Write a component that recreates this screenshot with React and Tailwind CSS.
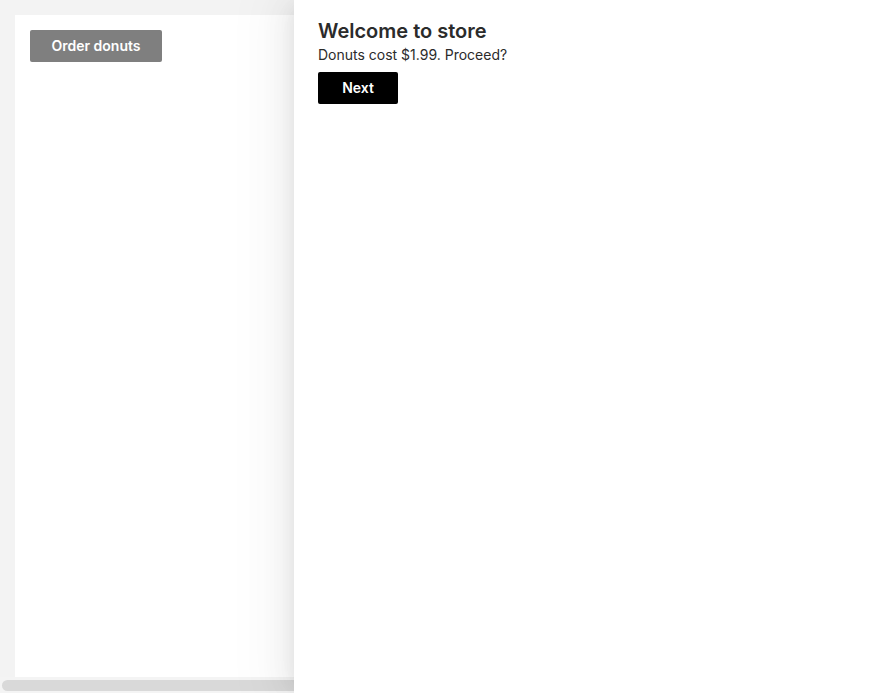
export default function App() {
  return (
    <div className="relative h-[693px] w-[894px] overflow-hidden bg-[#f3f3f3] font-['Inter',sans-serif]">
      <div className="flex h-[677px] flex-col pl-[15px] pt-[15px]">
        <div className="flex-1 bg-white p-[15px]">
          <button className="h-8 w-[132px] rounded-[2px] bg-[#7f7f7f] text-sm font-semibold text-white">
            Order donuts
          </button>
        </div>
      </div>
      <div className="flex h-4 items-center bg-[#f4f4f4] px-[2px]">
        <div className="h-[11px] w-[880px] rounded-full bg-[#d9d9d9]" />
      </div>

      <aside className="absolute inset-y-0 right-0 w-[600px] bg-white px-6 pt-[19px] shadow-[-6px_0_16px_-8px_rgba(0,0,0,0.08),-9px_0_28px_0_rgba(0,0,0,0.05),-12px_0_48px_16px_rgba(0,0,0,0.03)]">
        <h2 className="text-xl leading-6 font-semibold text-[#2b2b2b]">Welcome to store</h2>
        <p className="mt-[2px] text-sm leading-5 text-[#2b2b2b]">Donuts cost $1.99. Proceed?</p>
        <button className="mt-[7px] h-8 w-20 rounded-[2px] bg-black text-sm font-semibold text-white">
          Next
        </button>
      </aside>
    </div>
  )
}
